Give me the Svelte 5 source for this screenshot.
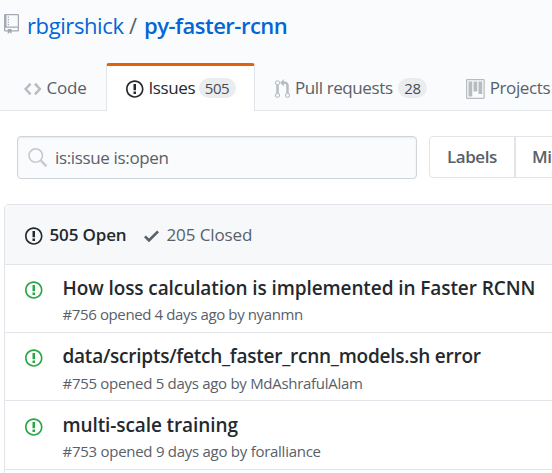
<script>
  const issues = [
    { title: 'How loss calculation is implemented in Faster RCNN', meta: '#756 opened 4 days ago by nyanmn', ts: -0.09, ms: -0.38 },
    { title: 'data/scripts/fetch_faster_rcnn_models.sh error', meta: '#755 opened 5 days ago by MdAshrafulAlam', ts: -0.24, ms: -0.29 },
    { title: 'multi-scale training', meta: '#753 opened 9 days ago by foralliance', ts: -0.1, ms: -0.27 }
  ];
</script>

{#snippet issueIcon()}
  <svg class="issue-icon" width="17.5" height="20" viewBox="0 0 14 16"><path fill-rule="evenodd" d="M7 2.3c3.14 0 5.7 2.56 5.7 5.7s-2.56 5.7-5.7 5.7A5.71 5.71 0 0 1 1.3 8c0-3.14 2.56-5.7 5.7-5.7zM7 1C3.14 1 0 4.14 0 8s3.14 7 7 7 7-3.14 7-7-3.14-7-7-7zm1 3H6v5h2V4zm0 6H6v2h2v-2z"/></svg>
{/snippet}

<div class="page">
  <header>
    <h1>
      <svg class="repo" width="15" height="20" viewBox="0 0 12 16"><path fill-rule="evenodd" d="M4 9H3V8h1v1zm0-3H3v1h1V6zm0-2H3v1h1V4zm0-2H3v1h1V2zm8-1v12c0 .55-.45 1-1 1H6v2l-1.5-1.5L3 16v-2H1c-.55 0-1-.45-1-1V1c0-.55.45-1 1-1h10c.55 0 1 .45 1 1zm-1 10H1v2h2v-1h3v1h5v-2zm0-10H2v9h9V1z"/></svg>
      <span class="owner">rbgirshick</span><span class="slash">/</span><span class="name">py-faster-rcnn</span>
    </h1>
    <nav>
      <div class="tab code">
        <svg width="17.5" height="20" viewBox="0 0 14 16"><path fill-rule="evenodd" d="M9.5 3L8 4.5 11.5 8 8 11.5 9.5 13 14 8 9.5 3zm-5 0L0 8l4.5 5L6 11.5 2.5 8 6 4.5 4.500 3z"/></svg>
        <span>Code</span>
      </div>
      <div class="tab active">
        {@render issueIcon()}
        <span>Issues</span><b>505</b>
      </div>
      <div class="tab pulls">
        <svg width="15" height="20" viewBox="0 0 12 16"><path fill-rule="evenodd" d="M11 11.280V5c-.03-.78-.34-1.470-.94-2.060C9.460 2.350 8.780 2.030 8 2H7V0L4 3l3 3V4h1c.27.02.48.11.69.31.21.2.3.42.31.69v6.280A1.993 1.993 0 0 0 10 15a1.993 1.993 0 0 0 1-3.720zm-1 2.920c-.66 0-1.200-.55-1.200-1.200 0-.65.55-1.200 1.200-1.200.65 0 1.200.55 1.200 1.200 0 .65-.55 1.200-1.200 1.200zM4 3c0-1.110-.89-2-2-2a1.993 1.993 0 0 0-1 3.720v6.560A1.993 1.993 0 0 0 2 15a1.993 1.993 0 0 0 1-3.720V4.720c.59-.34 1-.98 1-1.720zm-.8 10c0 .66-.55 1.200-1.200 1.200-.65 0-1.200-.55-1.200-1.200 0-.65.55-1.200 1.200-1.200.65 0 1.200.55 1.200 1.200zM2 4.200C1.340 4.200.8 3.650.8 3c0-.65.55-1.200 1.200-1.200.65 0 1.200.55 1.200 1.200 0 .65-.55 1.200-1.200 1.200z"/></svg>
        <span>Pull requests</span><b>28</b>
      </div>
      <div class="tab projects">
        <svg width="18.750" height="20" viewBox="0 0 15 16"><path fill-rule="evenodd" d="M10 12h3V2h-3v10zm-4-2h3V2H6v8zm-4 4h3V2H2v12zm-1 1h13V1H1v14zM14 0H1a1 1 0 0 0-1 1v14a1 1 0 0 0 1 1h13a1 1 0 0 0 1-1V1a1 1 0 0 0-1-1z"/></svg>
        <span>Projects</span>
      </div>
    </nav>
  </header>

  <div class="tools">
    <div class="search">
      <svg width="20" height="20" viewBox="0 0 16 16"><path fill-rule="evenodd" d="M15.700 13.300l-3.810-3.830A5.930 5.930 0 0 0 13 6c0-3.310-2.690-6-6-6S1 2.690 1 6s2.690 6 6 6c1.300 0 2.480-.41 3.470-1.110l3.830 3.810c.19.2.45.3.7.3.25 0 .52-.09.7-.3a.996.996 0 0 0 0-1.410v.01zM7 10.700c-2.590 0-4.700-2.110-4.700-4.700 0-2.590 2.110-4.700 4.700-4.700 2.590 0 4.700 2.110 4.700 4.700 0 2.590-2.110 4.700-4.700 4.700z"/></svg>
      <span>is:issue is:open</span>
    </div>
    <div class="buttons"><span class="labels">Labels</span><span class="miles">Milestones</span></div>
  </div>

  <section>
    <div class="states">
      {@render issueIcon()}
      <strong>505 Open</strong>
      <svg class="check" width="15" height="20" viewBox="0 0 12 16"><path fill-rule="evenodd" d="M12 5l-8 8-4-4 1.500-1.500L4 10l6.500-6.500L12 5z"/></svg>
      <span class="closed">205 Closed</span>
    </div>
    {#each issues as issue}
      <article>
        {@render issueIcon()}
        <div class="text">
          <h2 style="letter-spacing: {issue.ts}px">{issue.title}</h2>
          <p style="letter-spacing: {issue.ms}px">{issue.meta}</p>
        </div>
      </article>
    {/each}
  </section>
</div>

<style>
  * { box-sizing: border-box; }
  svg { display: block; flex: none; fill: currentColor; }
  h1, h2, p { margin: 0; font-weight: 400; }
  .page {
    width: 552px; height: 473px; overflow: hidden; background: #fff; color: #24292e;
    font-family: "Open Sans", "Noto Sans", sans-serif; font-size: 17px; white-space: nowrap;
  }
  header { height: 111px; background: #fafbfd; border-bottom: 1px solid #e1e4e8; }
  h1 { display: flex; height: 63px; padding: 10px 0 0 4px; font-size: 22px; line-height: 30px; color: #0366d6; }
  .repo { margin: 4px 8px 0 0; color: #a3aab1; }
  .owner { width: 102px; letter-spacing: -0.4px; }
  .slash { width: 15px; color: #586069; }
  .name { font-weight: 600; letter-spacing: -0.5px; }
  nav { display: flex; height: 48px; }
  .tab { display: flex; flex: none; height: 48px; padding-top: 13px; line-height: 24px; color: #586069; letter-spacing: -0.4px; }
  .tab svg { margin-top: 3px; color: #b8bcc0; }
  .tab span { margin-left: 5px; }
  .tab b {
    display: block; height: 20px; margin-top: 2px; border-radius: 10px; background: #ebecee;
    font-size: 15px; line-height: 20px; font-weight: 400; text-align: center; color: #444d56;
  }
  .code { width: 106px; padding-left: 24px; letter-spacing: -0.2px; }
  .active {
    width: 149px; padding: 10px 0 0 19px; background: #fff; color: #24292e;
    border: 1px solid #e1e4e8; border-top: 3px solid #e36209; border-bottom: 0; border-radius: 3px 3px 0 0;
  }
  .active svg { color: #24292e; }
  .active span { width: 50px; }
  .active b { width: 37px; }
  .pulls { width: 211px; padding-left: 20px; }
  .pulls span { width: 103px; }
  .pulls b { width: 29px; }
  .tools { display: flex; height: 93px; padding: 25px 0 0 17px; }
  .search {
    display: flex; flex: none; width: 400px; height: 43px; padding: 10px 0 0 9px; margin-right: 12px; background: #fafbfc;
    border: 1px solid #cfd4d9; border-radius: 4px; box-shadow: inset 0 1px 2px rgba(27,31,35,.075);
    line-height: 22px; color: #586069; letter-spacing: -0.35px;
  }
  .search svg { margin-top: 1px; color: #c6cbd1; }
  .search span { margin-left: 8px; }
  .buttons { display: flex; flex: none; width: 240px; height: 42px; border: 1px solid #e1e4e8; border-radius: 4px; line-height: 40px; font-weight: 600; color: #586069; letter-spacing: -0.45px; }
  .labels { width: 86px; padding-left: 17px; border-right: 2px solid #e1e4e8; }
  .miles { padding-left: 16px; }
  section { width: 600px; height: 300px; margin-left: 4px; border: 1px solid #e1e4e8; border-radius: 4px 4px 0 0; }
  .states { display: flex; height: 60px; padding: 18px 0 0 20px; line-height: 24px; background: #f6f8fa; border-bottom: 1px solid #e1e4e8; }
  .states svg { margin-top: 3px; }
  strong { width: 94px; margin-left: 7px; font-weight: 600; letter-spacing: -0.15px; }
  .check { color: #586069; }
  .closed { margin-left: 8px; color: #586069; letter-spacing: -0.1px; }
  article { display: flex; height: 68px; padding: 10px 0 0 20px; border-bottom: 1px solid #e1e4e8; }
  article svg { margin-top: 4.500px; color: #28a745; }
  article:last-child { height: 69px; padding-top: 11px; }
  .text { margin-left: 20px; }
  h2 { font-size: 19px; line-height: 27px; font-weight: 600; }
  p { font-size: 15px; line-height: 20px; margin-top: 2px; color: #586069; }
  article:nth-child(3) p { margin-top: 3px; }
</style>
